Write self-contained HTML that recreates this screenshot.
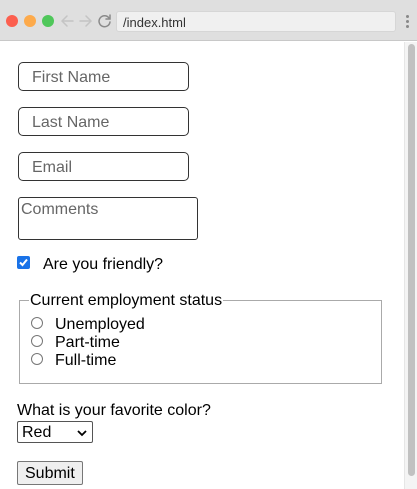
<!DOCTYPE html>
<html><head><style>
*{box-sizing:border-box;margin:0;padding:0}
body{width:417px;height:489px;overflow:hidden;background:#fff;font-family:"Liberation Sans",Arial,sans-serif;position:relative;color:#000}
.a{position:absolute}
.inp{position:absolute;left:18px;width:171px;height:29px;border:1px solid #333;border-radius:5px;font-size:16px;color:#666;padding:6px 0 0 13px}
.t{font-size:16px;position:absolute;white-space:nowrap}
.r{position:absolute;left:31px;width:12px;height:12px;border:1px solid #777;border-radius:50%;background:#fff}
</style></head><body>
<div class="a" style="left:0;top:0;width:417px;height:41px;background:#dfdfdf;border-bottom:1px solid #c8c8c8"></div>
<div class="a" style="left:6px;top:15px;width:12px;height:12px;border-radius:50%;background:#fc5f4f"></div>
<div class="a" style="left:24px;top:15px;width:12px;height:12px;border-radius:50%;background:#fdaa4b"></div>
<div class="a" style="left:42px;top:15px;width:12px;height:12px;border-radius:50%;background:#4fc75a"></div>
<svg class="a" style="left:58px;top:12px" width="56" height="18" viewBox="0 0 56 18"><g fill="none" stroke-width="1.5" stroke-linecap="round"><path d="M15 9H4M9 4L4 9L9 14" stroke="#c4c4c4"/><path d="M22 9H33M28 4L33 9L28 14" stroke="#c4c4c4"/><path d="M51 6A5.5 5.5 0 1 0 52 10" stroke="#8a8a8a"/><path d="M52 3V7H48" stroke="#8a8a8a"/></g></svg>
<div class="a" style="left:116px;top:11px;width:280px;height:21px;background:#f0f0f0;border:1px solid #d6d6d6;border-radius:3px;font-size:13px;color:#333;padding:3px 0 0 6px">/index.html</div>
<div class="a" style="left:406px;top:15px;width:3px;height:3px;border-radius:50%;background:#888;box-shadow:0 5px 0 #888,0 10px 0 #888"></div>
<div class="a" style="left:404px;top:42px;width:13px;height:447px;background:#f4f4f4;border-left:1px solid #e6e6e6"></div>
<div class="a" style="left:408px;top:44px;width:7px;height:432px;background:#c1c1c1;border-radius:4px"></div>

<div class="inp" style="top:62px">First Name</div>
<div class="inp" style="top:107px">Last Name</div>
<div class="inp" style="top:152px">Email</div>
<div class="a" style="left:18px;top:197px;width:180px;height:43px;border:1px solid #333;border-radius:3px;font-size:16px;color:#666;padding:3px 0 0 2px">Comments</div>

<div class="a" style="left:17px;top:256px;width:13px;height:13px;background:#1a73e8;border-radius:2px"><svg width="13" height="13"><path d="M3 6.5L5.5 9L10 3.5" fill="none" stroke="#fff" stroke-width="2"/></svg></div>
<div class="t" style="left:43px;top:256px">Are you friendly?</div>

<div class="a" style="left:19px;top:300px;width:363px;height:84px;border:1px solid #aaa"></div>
<div class="t" style="left:29px;top:292px;background:#fff;padding:0 1px">Current employment status</div>
<div class="r" style="top:317px"></div><div class="t" style="left:55px;top:316px">Unemployed</div>
<div class="r" style="top:335px"></div><div class="t" style="left:55px;top:334px">Part-time</div>
<div class="r" style="top:353px"></div><div class="t" style="left:55px;top:352px">Full-time</div>

<div class="t" style="left:17px;top:402px">What is your favorite color?</div>
<div class="a" style="left:17px;top:421px;width:76px;height:22px;border:1px solid #555;border-radius:2px;font-size:16px;padding:2px 0 0 4px">Red<svg class="a" style="left:59px;top:7px" width="10" height="8"><path d="M1 2L5 6L9 2" fill="none" stroke="#000" stroke-width="1.8"/></svg></div>
<div class="a" style="left:17px;top:461px;width:66px;height:24px;border:1px solid #777;border-radius:2px;background:#efefef;font-size:16px;padding:3px 0 0 7px">Submit</div>
</body></html>
